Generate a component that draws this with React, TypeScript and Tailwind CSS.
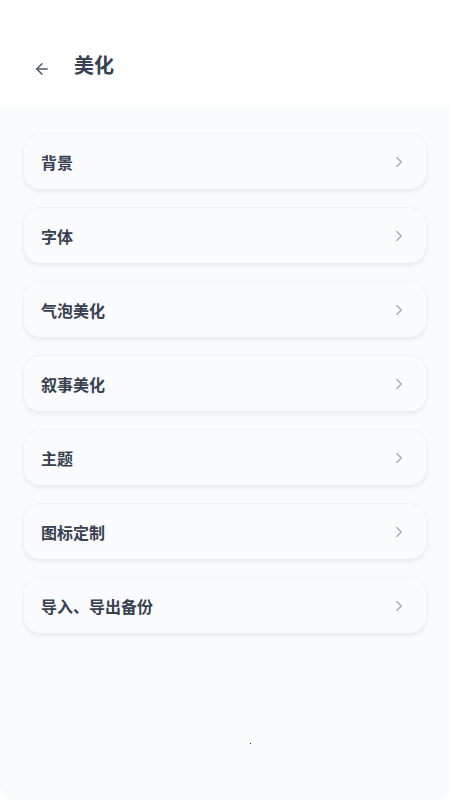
import { ArrowLeft, ChevronRight } from "lucide-react"

const items = ["背景", "字体", "气泡美化", "叙事美化", "主题", "图标定制", "导入、导出备份"]

export default function App() {
  return (
    <div
      className="relative h-[800px] w-[450px] overflow-hidden rounded-[14px] bg-[#f8fafc]"
      style={{ fontFamily: '"Noto Sans CJK SC", "Noto Sans", sans-serif' }}
    >
      <header className="flex h-[107px] items-end bg-white pb-[28px]">
        <button className="ml-[32px] flex h-[20px] w-[20px] items-center justify-center text-[#4b5563]">
          <ArrowLeft size={18} strokeWidth={1.8} />
        </button>
        <h1 className="ml-[22px] text-[20px] font-bold leading-[28px] text-[#374151]">美化</h1>
      </header>

      <main className="flex flex-col gap-[19px] px-[24px] pt-[27px]">
        {items.map((label) => (
          <div
            key={label}
            className="flex h-[55px] items-center justify-between rounded-[16px] bg-[#fafbfd] pl-[17px] pr-[18px] shadow-[0_2px_5px_rgba(15,23,42,0.08),0_-1px_1px_rgba(15,23,42,0.02)]"
          >
            <span className="text-[16px] font-semibold text-[#374151]">{label}</span>
            <ChevronRight size={18} strokeWidth={1.5} className="text-[#9ca3af]" />
          </div>
        ))}
      </main>

      <div className="absolute left-[250px] top-[743px] h-[1px] w-[1px] bg-[#333]" />
    </div>
  )
}
